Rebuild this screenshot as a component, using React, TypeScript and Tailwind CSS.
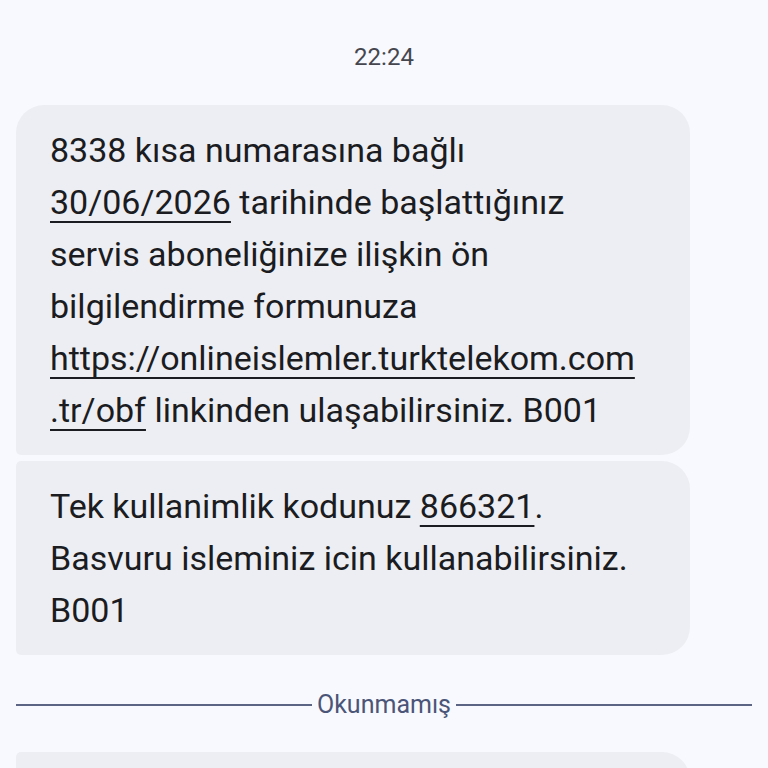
import React from 'react'

const link = 'underline decoration-2 underline-offset-[7px]'

export default function App() {
  return (
    <div
      className="h-[768px] w-[768px] overflow-hidden bg-[#f8f9fe] text-[#1b1c21]"
      style={{ fontFamily: 'Roboto, "Noto Sans", sans-serif' }}
    >
      <div className="pt-[42px] text-center text-[24px] leading-[30px] text-[#46474e]">22:24</div>

      <div className="mt-[33px] flex flex-col gap-[6px] pl-4">
        <div className="w-[674px] rounded-[28px] rounded-bl-[5px] bg-[#edeef3] px-[34px] py-[19px] text-[34px] leading-[52px] whitespace-nowrap">
          8338 kısa numarasına bağlı
          <br />
          <span className={link}>30/06/2026</span> tarihinde başlattığınız
          <br />
          servis aboneliğinize ilişkin ön
          <br />
          bilgilendirme formunuza
          <br />
          <span className={link}>https://onlineislemler.turktelekom.com</span>
          <br />
          <span className={link}>.tr/obf</span> linkinden ulaşabilirsiniz. B001
        </div>

        <div className="w-[674px] rounded-[28px] rounded-l-[5px] bg-[#edeef3] px-[34px] py-[19px] text-[34px] leading-[52px] whitespace-nowrap">
          Tek kullanimlik kodunuz <span className={link}>866321</span>.
          <br />
          Basvuru isleminiz icin kullanabilirsiniz.
          <br />
          B001
        </div>
      </div>

      <div className="mt-[35px] flex items-center gap-[5px] px-4">
        <div className="h-[2px] flex-1 bg-[#5d6584]" />
        <span className="text-[25px] leading-[30px] text-[#4b5577]">Okunmamış</span>
        <div className="h-[2px] flex-1 bg-[#5d6584]" />
      </div>

      <div className="mt-[32px] ml-4 h-[120px] w-[674px] rounded-[28px] rounded-tl-[5px] bg-[#edeef3]" />
    </div>
  )
}
